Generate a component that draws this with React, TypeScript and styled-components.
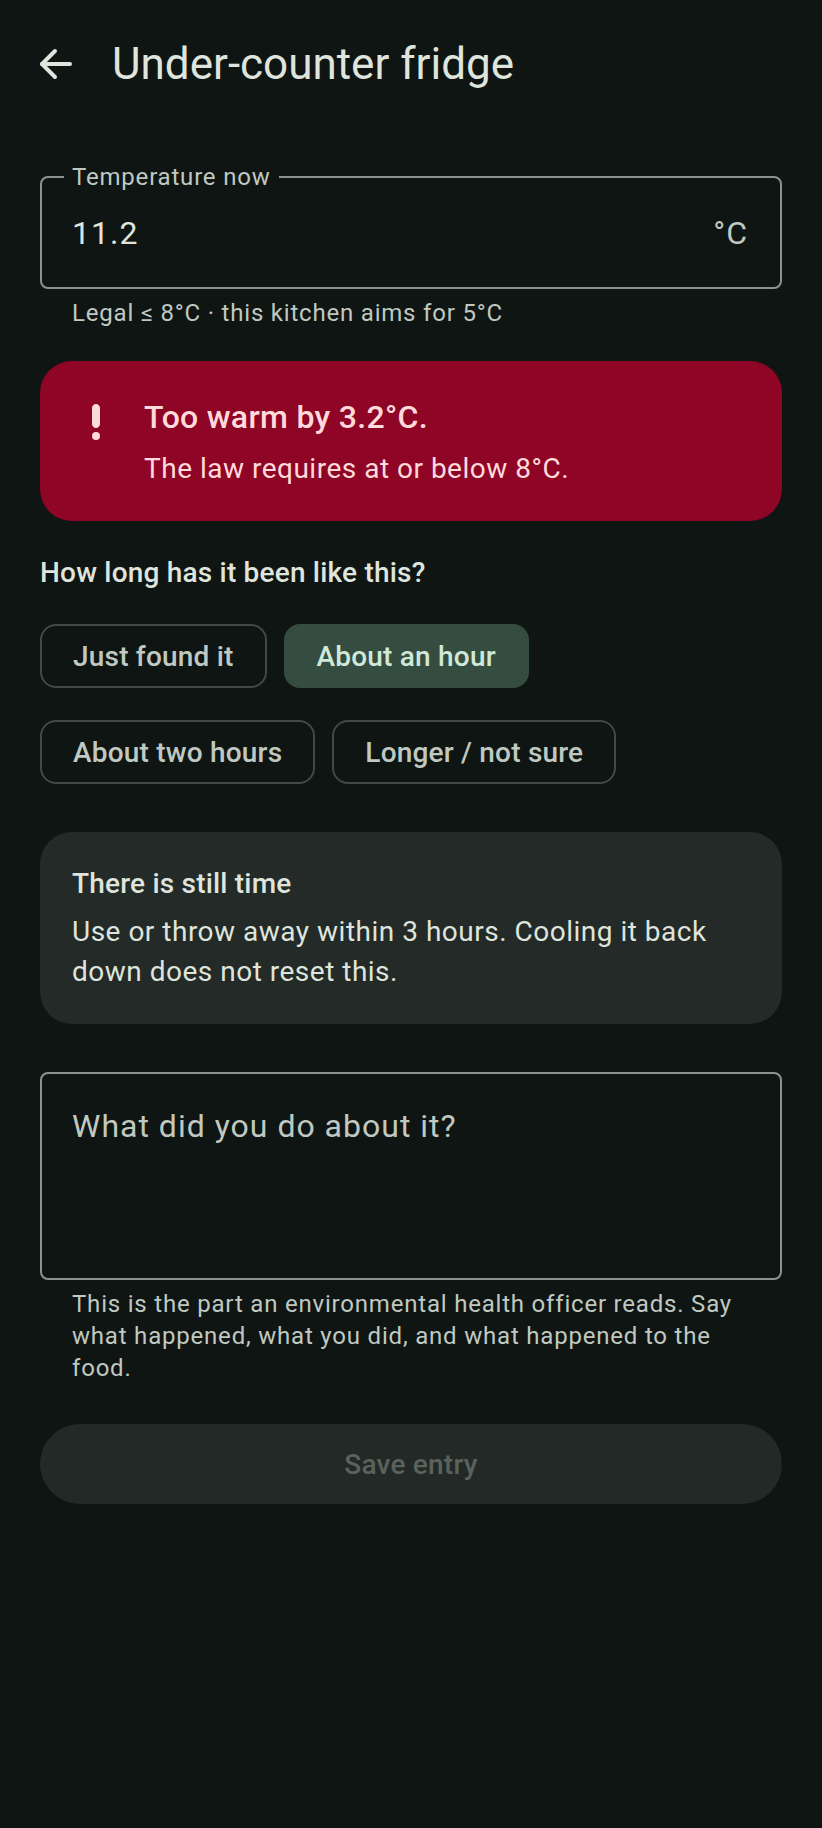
import React from 'react';
import styled, { createGlobalStyle } from 'styled-components';

const bg = '#0f1512';
const onSurface = '#dfe4dd';
const onSurfaceVariant = '#c0c9c1';
const outline = '#8a938c';
const outlineVariant = '#404943';

const GlobalStyle = createGlobalStyle`
  html, body {
    margin: 0;
    padding: 0;
    background: ${bg};
  }
  body {
    font-family: Roboto, "Noto Sans", "Liberation Sans", sans-serif;
    color: ${onSurface};
  }
  * {
    box-sizing: border-box;
  }
`;

const Page = styled.div`
  width: 822px;
  min-height: 1828px;
  background: ${bg};
`;

const TopBar = styled.header`
  height: 128px;
  display: flex;
  align-items: center;
  padding-left: 8px;
`;

const BackButton = styled.button`
  width: 96px;
  height: 96px;
  display: flex;
  align-items: center;
  justify-content: center;
  background: none;
  border: none;
  padding: 0;
  color: ${onSurface};
  cursor: pointer;
`;

const Title = styled.h1`
  margin: 0 0 0 8px;
  font-size: 44px;
  line-height: 56px;
  font-weight: 400;
  color: ${onSurface};
`;

const Content = styled.main`
  display: flex;
  flex-direction: column;
  padding: 0 40px;
`;

const Field = styled.fieldset`
  margin: 33px 0 0;
  padding: 16px 32px 30px 30px;
  border: 2px solid ${outline};
  border-radius: 8px;
  min-width: 0;
`;

const Legend = styled.legend`
  margin-left: -8px;
  padding: 0 8px;
  font-size: 24px;
  line-height: 32px;
  letter-spacing: 0.8px;
  color: ${onSurfaceVariant};
`;

const FieldRow = styled.div`
  display: flex;
  align-items: center;
  justify-content: space-between;
  font-size: 32px;
  line-height: 48px;
  letter-spacing: 1px;
`;

const Value = styled.span`
  color: ${onSurface};
`;

const Suffix = styled.span`
  color: ${onSurfaceVariant};
`;

const Supporting = styled.p`
  margin: 8px 0 0;
  padding: 0 32px;
  font-size: 24px;
  line-height: 32px;
  letter-spacing: 0.8px;
  color: ${onSurfaceVariant};
`;

const Card = styled.section<{ $tone: 'error' | 'neutral' }>`
  margin-top: 32px;
  border-radius: 32px;
  padding: 32px;
  background: ${({ $tone }) => ($tone === 'error' ? '#8f0526' : '#232a27')};
  color: ${({ $tone }) => ($tone === 'error' ? '#ffdadb' : onSurface)};
`;

const AlertRow = styled.div`
  display: flex;
  align-items: flex-start;
  gap: 24px;
`;

const AlertIcon = styled.svg`
  flex: none;
  width: 48px;
  height: 48px;
  margin-top: 5px;
`;

const TextColumn = styled.div`
  display: flex;
  flex-direction: column;
  gap: 8px;
`;

const AlertTitle = styled.div`
  font-size: 32px;
  line-height: 48px;
  font-weight: 500;
  letter-spacing: 0.3px;
`;

const CardTitle = styled.div`
  font-size: 28px;
  line-height: 40px;
  font-weight: 500;
  letter-spacing: 0.2px;
`;

const CardBody = styled.div`
  font-size: 28px;
  line-height: 40px;
  letter-spacing: 0.5px;
`;

const Question = styled.h2`
  margin: 32px 0 0;
  font-size: 28px;
  line-height: 40px;
  font-weight: 500;
  letter-spacing: 0.2px;
  color: ${onSurface};
`;

const ChipGroup = styled.div`
  margin-top: 15px;
  display: flex;
  flex-wrap: wrap;
  column-gap: 17px;
`;

const ChipSlot = styled.div`
  height: 96px;
  display: flex;
  align-items: center;
`;

const Chip = styled.button<{ $selected?: boolean }>`
  height: 64px;
  padding: 0 31px;
  border-radius: 16px;
  border: 2px solid ${({ $selected }) => ($selected ? '#354d40' : outlineVariant)};
  background: ${({ $selected }) => ($selected ? '#354d40' : 'transparent')};
  color: ${({ $selected }) => ($selected ? '#d0e8d8' : onSurfaceVariant)};
  font-family: inherit;
  font-size: 28px;
  font-weight: 500;
  letter-spacing: 0.2px;
  cursor: pointer;
`;

const NoteArea = styled.textarea`
  margin-top: 48px;
  width: 100%;
  height: 208px;
  padding: 28px 30px;
  border: 2px solid ${outline};
  border-radius: 8px;
  background: transparent;
  color: ${onSurface};
  font-family: inherit;
  font-size: 32px;
  line-height: 48px;
  letter-spacing: 1px;
  resize: none;
  outline: none;
  display: block;

  &::placeholder {
    color: ${onSurfaceVariant};
  }
`;

const SaveButton = styled.button`
  margin-top: 40px;
  height: 80px;
  width: 100%;
  border: none;
  border-radius: 40px;
  background: #222926;
  color: #5b625e;
  font-family: inherit;
  font-size: 28px;
  font-weight: 500;
  letter-spacing: 0.2px;
`;

const durations = ['Just found it', 'About an hour', 'About two hours', 'Longer / not sure'];

export default function App() {
  const [duration, setDuration] = React.useState('About an hour');

  return (
    <Page>
      <GlobalStyle />
      <TopBar>
        <BackButton aria-label="Back">
          <svg width="48" height="48" viewBox="0 0 48 48" fill="none" stroke="currentColor" strokeWidth="4" strokeLinecap="round" strokeLinejoin="round">
            <path d="M38 24H10" />
            <path d="M23 11L10 24l13 13" />
          </svg>
        </BackButton>
        <Title>Under-counter fridge</Title>
      </TopBar>

      <Content>
        <Field>
          <Legend>Temperature now</Legend>
          <FieldRow>
            <Value>11.2</Value>
            <Suffix>°C</Suffix>
          </FieldRow>
        </Field>
        <Supporting>Legal ≤ 8°C · this kitchen aims for 5°C</Supporting>

        <Card $tone="error">
          <AlertRow>
            <AlertIcon viewBox="0 0 24 24" fill="currentColor">
              <path d="M12 21a2 2 0 1 0 0-4 2 2 0 0 0 0 4zm0-18c-1.1 0-2 .9-2 2v8c0 1.1.9 2 2 2s2-.9 2-2V5c0-1.1-.9-2-2-2z" />
            </AlertIcon>
            <TextColumn>
              <AlertTitle>Too warm by 3.2°C.</AlertTitle>
              <CardBody>The law requires at or below 8°C.</CardBody>
            </TextColumn>
          </AlertRow>
        </Card>

        <Question>How long has it been like this?</Question>
        <ChipGroup>
          {durations.map((d) => (
            <ChipSlot key={d}>
              <Chip $selected={d === duration} onClick={() => setDuration(d)}>
                {d}
              </Chip>
            </ChipSlot>
          ))}
        </ChipGroup>

        <Card $tone="neutral">
          <TextColumn>
            <CardTitle>There is still time</CardTitle>
            <CardBody>Use or throw away within 3 hours. Cooling it back down does not reset this.</CardBody>
          </TextColumn>
        </Card>

        <NoteArea placeholder="What did you do about it?" />
        <Supporting>
          This is the part an environmental health officer reads. Say what happened, what you did, and what happened to the food.
        </Supporting>

        <SaveButton disabled>Save entry</SaveButton>
      </Content>
    </Page>
  );
}
